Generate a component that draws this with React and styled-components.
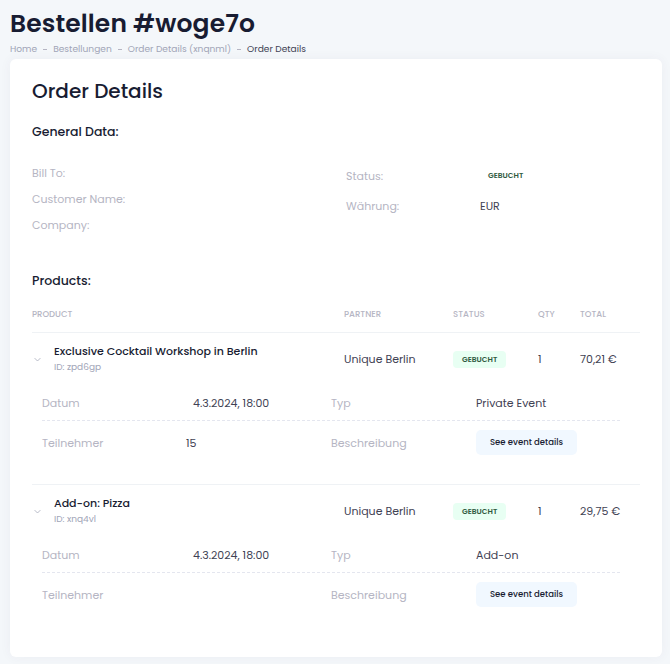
import styled, { createGlobalStyle } from "styled-components";

const GlobalStyle = createGlobalStyle`
  body {
    margin: 0;
    background: #f4f7fa;
    font-family: "Poppins", "Inter", "Noto Sans", sans-serif;
    color: #181c32;
  }
`;

const Page = styled.div`
  padding: 8px 8px 7px 10px;
`;

const Title = styled.h1`
  margin: 0;
  font-size: 25px;
  font-weight: 600;
  line-height: 32px;
  letter-spacing: 0.1px;
`;

const Crumbs = styled.div`
  display: flex;
  align-items: center;
  gap: 6px;
  font-size: 9.1px;
  line-height: 14px;
  margin-top: 2px;
  color: #a1a5b7;
`;

const Dash = styled.span`
  width: 4px;
  height: 1px;
  background: #b5b5c3;
`;

const Crumb = styled.span`
  color: ${(p) => (p.$active ? "#3f4254" : "#a1a5b7")};
`;

const Card = styled.div`
  margin-top: 3px;
  background: #fff;
  border-radius: 6px;
  box-shadow: 0 0 12px rgba(82, 63, 105, 0.05);
  padding: 17px 22px 50px 22px;
`;

const CardTitle = styled.h2`
  margin: 0;
  font-size: 20px;
  font-weight: 500;
  line-height: 30px;
`;

const SectionTitle = styled.h3`
  margin: ${(p) => p.$top}px 0 0;
  font-size: 12.5px;
  font-weight: 500;
  line-height: 18px;
`;

const General = styled.div`
  display: grid;
  grid-template-columns: 314px 1fr;
  margin-top: 24px;
`;

const InfoList = styled.div`
  display: flex;
  flex-direction: column;
  gap: ${(p) => p.$gap}px;
  padding-top: ${(p) => p.$pt}px;
`;

const InfoRow = styled.div`
  display: grid;
  grid-template-columns: ${(p) => p.$cols || "1fr"};
  align-items: center;
  font-size: 11px;
  line-height: 16px;
`;

const Label = styled.span`
  color: #b5b5c3;
`;

const Value = styled.span`
  color: #3f4254;
`;

const StatusText = styled.span`
  font-size: 7.5px;
  font-weight: 600;
  color: #2f5a40;
  padding-left: 8px;
`;

const TableHead = styled.div`
  display: grid;
  grid-template-columns: 312px 109px 85px 42px 1fr;
  margin-top: 18px;
  padding-bottom: 11px;
  border-bottom: 1px solid #eff2f5;
  font-size: 8.5px;
  font-weight: 500;
  color: #b5b5c3;
  text-transform: uppercase;
  line-height: 13px;
`;

const ProductBlock = styled.div`
  border-bottom: ${(p) => (p.$last ? "none" : "1px solid #eff2f5")};
  padding-top: 10px;
  padding-bottom: ${(p) => (p.$last ? 0 : 29)}px;
`;

const ProductRow = styled.div`
  display: grid;
  grid-template-columns: 312px 109px 85px 42px 1fr;
  align-items: center;
  font-size: 11px;
  color: #3f4254;
`;

const ProductName = styled.div`
  display: flex;
  align-items: center;
  gap: 12px;
  padding-left: 1px;
`;

const Chevron = styled.svg`
  width: 9px;
  height: 9px;
  margin-top: 1px;
  color: #a1a5b7;
`;

const NameText = styled.div`
  display: flex;
  flex-direction: column;
`;

const Name = styled.span`
  font-size: 11px;
  font-weight: 500;
  color: #181c32;
  line-height: 16px;
`;

const ProductId = styled.span`
  font-size: 9px;
  color: #a1a5b7;
  line-height: 15px;
  margin-top: 1px;
`;

const Badge = styled.span`
  justify-self: start;
  background: #e8fff3;
  color: #2f5a40;
  font-size: 7.5px;
  font-weight: 600;
  padding: 4px 9px;
  border-radius: 4px;
  line-height: 9px;
`;

const Details = styled.div`
  margin: 20px 20px 0 10px;
`;

const DetailRow = styled.div`
  display: grid;
  grid-template-columns: 151px 138px 145px 1fr;
  align-items: center;
  font-size: 11px;
  line-height: 16px;
  padding: ${(p) => p.$pad};
  border-bottom: ${(p) => (p.$line ? "1px dashed #e4e6ef" : "none")};
`;

const GuestValue = styled(Value)`
  margin-left: -7px;
`;

const DetailButton = styled.button`
  justify-self: start;
  width: 101px;
  height: 25px;
  border: none;
  border-radius: 5px;
  background: #f1f8ff;
  color: #181c32;
  font-family: inherit;
  font-size: 8.5px;
  font-weight: 500;
  cursor: pointer;
`;

const products = [
  {
    name: "Exclusive Cocktail Workshop in Berlin",
    id: "zpd6gp",
    partner: "Unique Berlin",
    qty: 1,
    total: "70,21 €",
    date: "4.3.2024, 18:00",
    type: "Private Event",
    guests: "15",
  },
  {
    name: "Add-on: Pizza",
    id: "xnq4vl",
    partner: "Unique Berlin",
    qty: 1,
    total: "29,75 €",
    date: "4.3.2024, 18:00",
    type: "Add-on",
    guests: "",
  },
];

const ChevronIcon = () => (
  <Chevron viewBox="0 0 24 24" fill="none" stroke="currentColor" strokeWidth="2" strokeLinecap="round" strokeLinejoin="round">
    <path d="M5 9l7 7 7-7" />
  </Chevron>
);

export default function App() {
  return (
    <>
      <GlobalStyle />
      <Page>
        <Title>Bestellen #woge7o</Title>
        <Crumbs>
          <Crumb>Home</Crumb>
          <Dash />
          <Crumb>Bestellungen</Crumb>
          <Dash />
          <Crumb>Order Details (xnqnml)</Crumb>
          <Dash />
          <Crumb $active>Order Details</Crumb>
        </Crumbs>
        <Card>
          <CardTitle>Order Details</CardTitle>
          <SectionTitle $top={17}>General Data:</SectionTitle>
          <General>
            <InfoList $gap={10} $pt={0}>
              <InfoRow>
                <Label>Bill To:</Label>
              </InfoRow>
              <InfoRow>
                <Label>Customer Name:</Label>
              </InfoRow>
              <InfoRow>
                <Label>Company:</Label>
              </InfoRow>
            </InfoList>
            <InfoList $gap={14} $pt={3}>
              <InfoRow $cols="134px 1fr">
                <Label>Status:</Label>
                <StatusText>GEBUCHT</StatusText>
              </InfoRow>
              <InfoRow $cols="134px 1fr">
                <Label>Währung:</Label>
                <Value>EUR</Value>
              </InfoRow>
            </InfoList>
          </General>
          <SectionTitle $top={39}>Products:</SectionTitle>
          <TableHead>
            <span>Product</span>
            <span>Partner</span>
            <span>Status</span>
            <span>Qty</span>
            <span>Total</span>
          </TableHead>
          {products.map((p, i) => (
            <ProductBlock key={p.id} $last={i === products.length - 1}>
              <ProductRow>
                <ProductName>
                  <ChevronIcon />
                  <NameText>
                    <Name>{p.name}</Name>
                    <ProductId>ID: {p.id}</ProductId>
                  </NameText>
                </ProductName>
                <span>{p.partner}</span>
                <Badge>GEBUCHT</Badge>
                <span>{p.qty}</span>
                <span>{p.total}</span>
              </ProductRow>
              <Details>
                <DetailRow $line $pad="0 0 9px">
                  <Label>Datum</Label>
                  <Value>{p.date}</Value>
                  <Label>Typ</Label>
                  <Value>{p.type}</Value>
                </DetailRow>
                <DetailRow $pad="9px 0 0">
                  <Label>Teilnehmer</Label>
                  <GuestValue>{p.guests}</GuestValue>
                  <Label>Beschreibung</Label>
                  <DetailButton>See event details</DetailButton>
                </DetailRow>
              </Details>
            </ProductBlock>
          ))}
        </Card>
      </Page>
    </>
  );
}
